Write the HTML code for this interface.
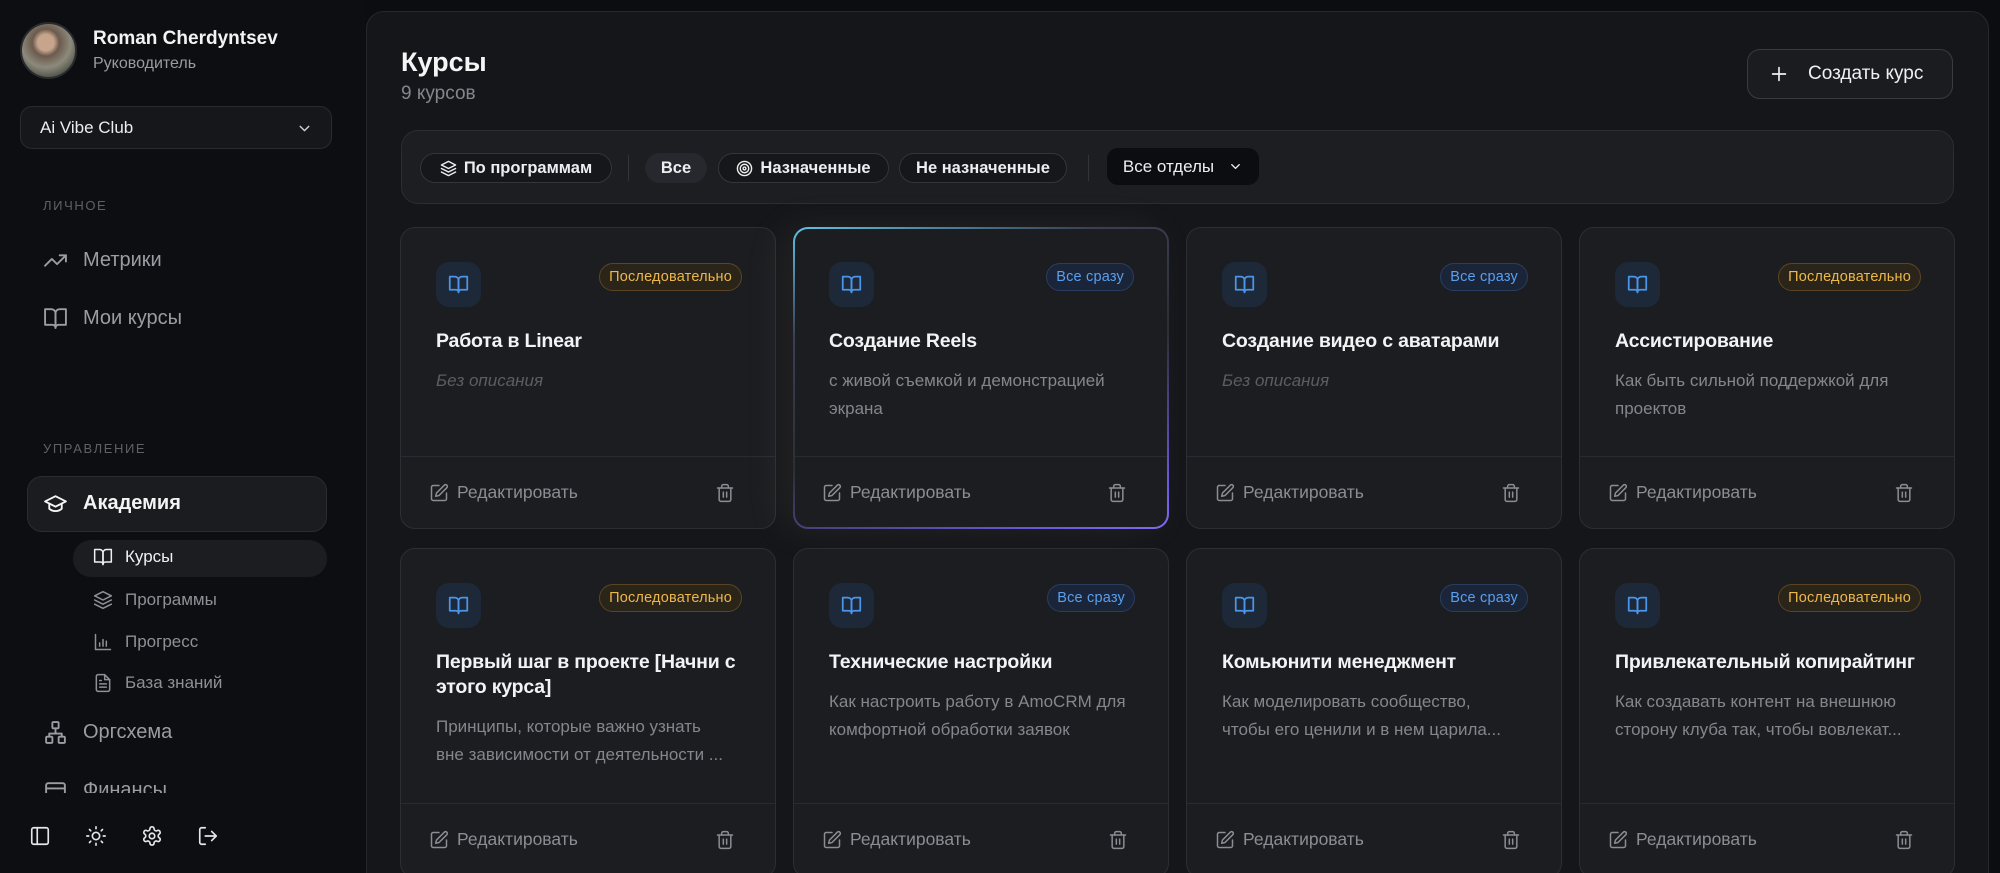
<!DOCTYPE html>
<html><head><meta charset="utf-8"><style>
*{box-sizing:border-box;margin:0;padding:0}
html,body{width:2000px;height:873px;overflow:hidden;background:#0c0d10;font-family:"Liberation Sans",sans-serif;color:#e8e8ea;position:relative}
svg{fill:none;stroke:currentColor;stroke-width:2;stroke-linecap:round;stroke-linejoin:round;display:block}
.abs{position:absolute}
.side{position:absolute;left:0;top:0;width:365px;height:873px;background:#0d0e11;overflow:hidden}
.avatar{left:20px;top:22px;width:57px;height:57px;border-radius:50%;background:radial-gradient(circle at 45% 35%,#c7a58c 0 18%,#6b5a4d 30%,#8d8a7c 55%,#4d5046 80%);border:2px solid #2a2b2f}
.name{left:93px;top:28px;font-size:19px;font-weight:700;color:#f3f3f4}
.role{left:93px;top:55px;font-size:16px;color:#9a9ba0}
.dd{left:20px;top:106px;width:312px;height:43px;border:1px solid #2a2b30;border-radius:12px;background:#16171b}
.dd span{position:absolute;left:19px;top:11px;font-size:17px;color:#ececee}
.sec{font-size:13px;letter-spacing:1.6px;color:#5f6066;left:43px}
.nav{left:43px;display:flex;align-items:center;gap:15px;font-size:20px;color:#9c9da2}
.nav svg{width:25px;height:25px;stroke-width:1.8}
.acad{left:27px;top:476px;width:300px;height:56px;border-radius:15px;background:#1b1c20;border:1px solid #2b2c31}
.sub{left:93px;display:flex;align-items:center;gap:12px;font-size:17px;color:#8f9095}
.sub svg{width:20px;height:20px;stroke-width:1.8}
.kur{left:73px;top:540px;width:254px;height:37px;border-radius:18px;background:#1c1d21}
.bot svg{width:22px;height:22px;color:#e6e6e8;stroke-width:1.8}
.panel{position:absolute;left:366px;top:11px;width:1623px;height:862px;border-radius:18px 18px 0 0;background:#15161a;border:1px solid #27282d;border-bottom:none}
.h1{left:34px;top:35px;font-size:27px;font-weight:700;color:#f5f5f6}
.cnt{left:34px;top:71px;font-size:19px;color:#85868c}
.btn{left:1380px;top:37px;width:206px;height:50px;border-radius:13px;border:1px solid #3a3b40;background:#1b1c20;display:flex;align-items:center;font-size:19px;color:#f0f0f2}
.filt{left:34px;top:118px;width:1553px;height:74px;border-radius:17px;background:#1d1e22;border:1px solid #2c2d32}
.chip{position:absolute;top:22px;height:30px;border-radius:15px;border:1px solid #34353b;background:#16171b;display:flex;align-items:center;justify-content:center;gap:7px;font-size:16.5px;font-weight:700;color:#eeeef0}
.chip svg{width:17px;height:17px}
.vs{position:absolute;top:24px;width:1px;height:26px;background:#34353a}
.card{position:absolute;width:376px;border-radius:15px;background:#1c1d21;border:1px solid #2d2e33;display:flex;flex-direction:column;overflow:hidden}
.cb{padding:34px 35px 0;height:228px;flex:none}
.r2 .cb{height:254px}
.top{height:45px;position:relative}
.ic{width:45px;height:45px;border-radius:13px;background:#1d2938;color:#4b95ea;display:flex;align-items:center;justify-content:center}
.ic svg{width:21px;height:21px;stroke-width:2}
.badge{position:absolute;right:-2px;top:1px;height:28px;border-radius:14px;padding:0 9px;font-size:14.5px;display:flex;align-items:center;letter-spacing:.2px}
.seq{background:#2b2418;border:1px solid #5b4524;color:#edb84a}
.all{background:#1a2539;border:1px solid #2a3d5f;color:#5a9ff0}
.t{margin-top:22px;font-size:19.5px;line-height:25px;font-weight:700;color:#f3f3f5;white-space:nowrap;letter-spacing:-.2px}
.d{margin-top:13px;font-size:17px;line-height:28px;color:#85868b;height:56px;white-space:nowrap}
.d.i{font-style:italic;color:#5c5d62}
.ft{border-top:1px solid #2a2b30;height:74px;position:relative;color:#8c8d92;font-size:17.5px;flex:none}
.ft .e{position:absolute;left:28px;top:25px;display:flex;align-items:center;gap:8px}
.ft svg{width:20px;height:20px;stroke-width:1.8}
.ft .tr{position:absolute;right:40px;top:26px}
.sel{border:2px solid transparent;background:linear-gradient(#1c1d21,#1c1d21) padding-box,linear-gradient(160deg,#5fc4e6 0%,#3a3f55 25%,#2d2e33 55%,#6a5ae0 90%,#7b6cf0 100%) border-box;box-shadow:-12px 0 40px rgba(200,190,150,.08)}
</style></head><body>
<svg width="0" height="0" style="position:absolute">
<defs>
<symbol id="book" viewBox="0 0 24 24"><path d="M2 3h6a4 4 0 0 1 4 4v14a3 3 0 0 0-3-3H2z"/><path d="M22 3h-6a4 4 0 0 0-4 4v14a3 3 0 0 1 3-3h7z"/></symbol>
<symbol id="pen" viewBox="0 0 24 24"><path d="M12 3H5a2 2 0 0 0-2 2v14a2 2 0 0 0 2 2h14a2 2 0 0 0 2-2v-7"/><path d="M18.4 2.6a2.1 2.1 0 0 1 3 3L12 15l-4 1 1-4z"/></symbol>
<symbol id="trash" viewBox="0 0 24 24"><path d="M3 6h18"/><path d="M19 6v14a2 2 0 0 1-2 2H7a2 2 0 0 1-2-2V6"/><path d="M8 6V4a2 2 0 0 1 2-2h4a2 2 0 0 1 2 2v2"/><path d="M10 11v6M14 11v6"/></symbol>
<symbol id="layers" viewBox="0 0 24 24"><path d="m12 2 10 5-10 5L2 7z"/><path d="m2 12 10 5 10-5"/><path d="m2 17 10 5 10-5"/></symbol>
</defs></svg>

<div class="side">
  <div class="abs avatar"></div>
  <div class="abs name">Roman Cherdyntsev</div>
  <div class="abs role">Руководитель</div>
  <div class="abs dd"><span>Ai Vibe Club</span><svg viewBox="0 0 24 24" style="position:absolute;right:18px;top:13px;width:17px;height:17px;color:#cfd0d3"><path d="m6 9 6 6 6-6"/></svg></div>
  <div class="abs sec" style="top:198px">ЛИЧНОЕ</div>
  <div class="abs nav" style="top:248px"><svg viewBox="0 0 24 24"><path d="m22 7-8.5 8.5-5-5L2 17"/><path d="M16 7h6v6"/></svg>Метрики</div>
  <div class="abs nav" style="top:306px"><svg viewBox="0 0 24 24"><use href="#book"/></svg>Мои курсы</div>
  <div class="abs sec" style="top:441px">УПРАВЛЕНИЕ</div>
  <div class="abs acad"></div>
  <div class="abs nav" style="top:491px;color:#f4f4f5;font-weight:700"><svg viewBox="0 0 24 24"><path d="M22 10 12 5 2 10l10 5z"/><path d="M6 12v5c3 3 9 3 12 0v-5"/></svg>Академия</div>
  <div class="abs kur"></div>
  <div class="abs sub" style="top:547px;color:#f0f0f2"><svg viewBox="0 0 24 24"><use href="#book"/></svg>Курсы</div>
  <div class="abs sub" style="top:590px"><svg viewBox="0 0 24 24"><use href="#layers"/></svg>Программы</div>
  <div class="abs sub" style="top:632px"><svg viewBox="0 0 24 24"><path d="M3 3v18h18"/><path d="M8 17v-4M12 17V9M16 17v-6"/></svg>Прогресс</div>
  <div class="abs sub" style="top:673px"><svg viewBox="0 0 24 24"><path d="M14 2H6a2 2 0 0 0-2 2v16a2 2 0 0 0 2 2h12a2 2 0 0 0 2-2V8z"/><path d="M14 2v6h6M8 13h8M8 17h8M8 9h2"/></svg>База знаний</div>
  <div class="abs nav" style="top:720px"><svg viewBox="0 0 24 24"><rect x="9" y="2" width="6" height="6" rx="1"/><rect x="3" y="16" width="6" height="6" rx="1"/><rect x="15" y="16" width="6" height="6" rx="1"/><path d="M6 16v-3h12v3M12 8v5"/></svg>Оргсхема</div>
  <div class="abs" style="left:0;top:793px;width:365px;height:80px;background:#0d0e11;z-index:2"></div>
  <div class="abs nav" style="top:778px"><svg viewBox="0 0 24 24"><rect x="3" y="5" width="18" height="14" rx="2"/><path d="M3 10h18"/></svg>Финансы</div>
  <div class="abs bot" style="left:29px;top:825px;z-index:3;display:flex;gap:34px">
    <svg viewBox="0 0 24 24"><rect x="3" y="3" width="18" height="18" rx="2"/><path d="M9 3v18"/></svg>
    <svg viewBox="0 0 24 24"><circle cx="12" cy="12" r="4"/><path d="M12 2v2M12 20v2M4.9 4.9l1.4 1.4M17.7 17.7l1.4 1.4M2 12h2M20 12h2M6.3 17.7l-1.4 1.4M19.1 4.9l-1.4 1.4"/></svg>
    <svg viewBox="0 0 24 24"><path d="M12.2 2h-.4a2 2 0 0 0-2 2v.2a2 2 0 0 1-1 1.7l-.4.3a2 2 0 0 1-2 0l-.2-.1a2 2 0 0 0-2.7.7l-.2.4a2 2 0 0 0 .7 2.7l.2.1a2 2 0 0 1 1 1.7v.5a2 2 0 0 1-1 1.7l-.2.1a2 2 0 0 0-.7 2.7l.2.4a2 2 0 0 0 2.7.7l.2-.1a2 2 0 0 1 2 0l.4.3a2 2 0 0 1 1 1.7v.2a2 2 0 0 0 2 2h.4a2 2 0 0 0 2-2v-.2a2 2 0 0 1 1-1.7l.4-.3a2 2 0 0 1 2 0l.2.1a2 2 0 0 0 2.7-.7l.2-.4a2 2 0 0 0-.7-2.7l-.2-.1a2 2 0 0 1-1-1.7v-.5a2 2 0 0 1 1-1.7l.2-.1a2 2 0 0 0 .7-2.7l-.2-.4a2 2 0 0 0-2.7-.7l-.2.1a2 2 0 0 1-2 0l-.4-.3a2 2 0 0 1-1-1.7V4a2 2 0 0 0-2-2z"/><circle cx="12" cy="12" r="3"/></svg>
    <svg viewBox="0 0 24 24"><path d="M9 21H5a2 2 0 0 1-2-2V5a2 2 0 0 1 2-2h4"/><path d="m16 17 5-5-5-5M21 12H9"/></svg>
  </div>
</div>

<div class="panel">
  <div class="abs h1">Курсы</div>
  <div class="abs cnt">9 курсов</div>
  <div class="abs btn"><svg viewBox="0 0 24 24" style="width:22px;height:22px;margin-left:20px;stroke-width:1.8"><path d="M12 5v14M5 12h14"/></svg><span style="margin-left:18px">Создать курс</span></div>
  <div class="abs filt">
    <div class="chip" style="left:18px;width:192px"><svg viewBox="0 0 24 24"><use href="#layers"/></svg>По программам</div>
    <div class="vs" style="left:226px"></div>
    <div class="chip" style="left:243px;width:62px;border-color:#26272c;background:#27282d">Все</div>
    <div class="chip" style="left:316px;width:171px"><svg viewBox="0 0 24 24"><circle cx="12" cy="12" r="10"/><circle cx="12" cy="12" r="6"/><circle cx="12" cy="12" r="2"/></svg>Назначенные</div>
    <div class="chip" style="left:497px;width:168px">Не назначенные</div>
    <div class="vs" style="left:686px"></div>
    <div class="chip" style="left:705px;top:17px;height:37px;width:152px;border-radius:11px;border:none;background:#0c0d10;font-weight:400;font-size:17px;gap:14px">Все отделы<svg viewBox="0 0 24 24" style="width:15px;height:15px"><path d="m6 9 6 6 6-6"/></svg></div>
  </div>
</div>

<div class="card" style="left:400px;top:227px;height:302px"><div class="cb"><div class="top"><div class="ic"><svg viewBox="0 0 24 24"><use href="#book"/></svg></div><div class="badge seq">Последовательно</div></div><div class="t">Работа в Linear</div><div class="d i">Без описания</div></div><div class="ft"><div class="e"><svg viewBox="0 0 24 24"><use href="#pen"/></svg>Редактировать</div><svg class="tr" viewBox="0 0 24 24"><use href="#trash"/></svg></div></div>
<div class="card sel" style="left:793px;top:227px;height:302px"><div class="cb" style="padding-top:33px;padding-left:34px;height:227px"><div class="top"><div class="ic"><svg viewBox="0 0 24 24"><use href="#book"/></svg></div><div class="badge all">Все сразу</div></div><div class="t">Создание Reels</div><div class="d">с живой съемкой и демонстрацией<br>экрана</div></div><div class="ft"><div class="e" style="left:27px"><svg viewBox="0 0 24 24"><use href="#pen"/></svg>Редактировать</div><svg class="tr" viewBox="0 0 24 24"><use href="#trash"/></svg></div></div>
<div class="card" style="left:1186px;top:227px;height:302px"><div class="cb"><div class="top"><div class="ic"><svg viewBox="0 0 24 24"><use href="#book"/></svg></div><div class="badge all">Все сразу</div></div><div class="t">Создание видео с аватарами</div><div class="d i">Без описания</div></div><div class="ft"><div class="e"><svg viewBox="0 0 24 24"><use href="#pen"/></svg>Редактировать</div><svg class="tr" viewBox="0 0 24 24"><use href="#trash"/></svg></div></div>
<div class="card" style="left:1579px;top:227px;height:302px"><div class="cb"><div class="top"><div class="ic"><svg viewBox="0 0 24 24"><use href="#book"/></svg></div><div class="badge seq">Последовательно</div></div><div class="t">Ассистирование</div><div class="d">Как быть сильной поддержкой для<br>проектов</div></div><div class="ft"><div class="e"><svg viewBox="0 0 24 24"><use href="#pen"/></svg>Редактировать</div><svg class="tr" viewBox="0 0 24 24"><use href="#trash"/></svg></div></div>

<div class="card r2" style="left:400px;top:548px;height:330px"><div class="cb"><div class="top"><div class="ic"><svg viewBox="0 0 24 24"><use href="#book"/></svg></div><div class="badge seq">Последовательно</div></div><div class="t">Первый шаг в проекте [Начни с<br>этого курса]</div><div class="d">Принципы, которые важно узнать<br>вне зависимости от деятельности ...</div></div><div class="ft"><div class="e"><svg viewBox="0 0 24 24"><use href="#pen"/></svg>Редактировать</div><svg class="tr" viewBox="0 0 24 24"><use href="#trash"/></svg></div></div>
<div class="card r2" style="left:793px;top:548px;height:330px"><div class="cb"><div class="top"><div class="ic"><svg viewBox="0 0 24 24"><use href="#book"/></svg></div><div class="badge all">Все сразу</div></div><div class="t">Технические настройки</div><div class="d">Как настроить работу в AmoCRM для<br>комфортной обработки заявок</div></div><div class="ft"><div class="e"><svg viewBox="0 0 24 24"><use href="#pen"/></svg>Редактировать</div><svg class="tr" viewBox="0 0 24 24"><use href="#trash"/></svg></div></div>
<div class="card r2" style="left:1186px;top:548px;height:330px"><div class="cb"><div class="top"><div class="ic"><svg viewBox="0 0 24 24"><use href="#book"/></svg></div><div class="badge all">Все сразу</div></div><div class="t">Комьюнити менеджмент</div><div class="d">Как моделировать сообщество,<br>чтобы его ценили и в нем царила...</div></div><div class="ft"><div class="e"><svg viewBox="0 0 24 24"><use href="#pen"/></svg>Редактировать</div><svg class="tr" viewBox="0 0 24 24"><use href="#trash"/></svg></div></div>
<div class="card r2" style="left:1579px;top:548px;height:330px"><div class="cb"><div class="top"><div class="ic"><svg viewBox="0 0 24 24"><use href="#book"/></svg></div><div class="badge seq">Последовательно</div></div><div class="t">Привлекательный копирайтинг</div><div class="d">Как создавать контент на внешнюю<br>сторону клуба так, чтобы вовлекат...</div></div><div class="ft"><div class="e"><svg viewBox="0 0 24 24"><use href="#pen"/></svg>Редактировать</div><svg class="tr" viewBox="0 0 24 24"><use href="#trash"/></svg></div></div>
</body></html>
